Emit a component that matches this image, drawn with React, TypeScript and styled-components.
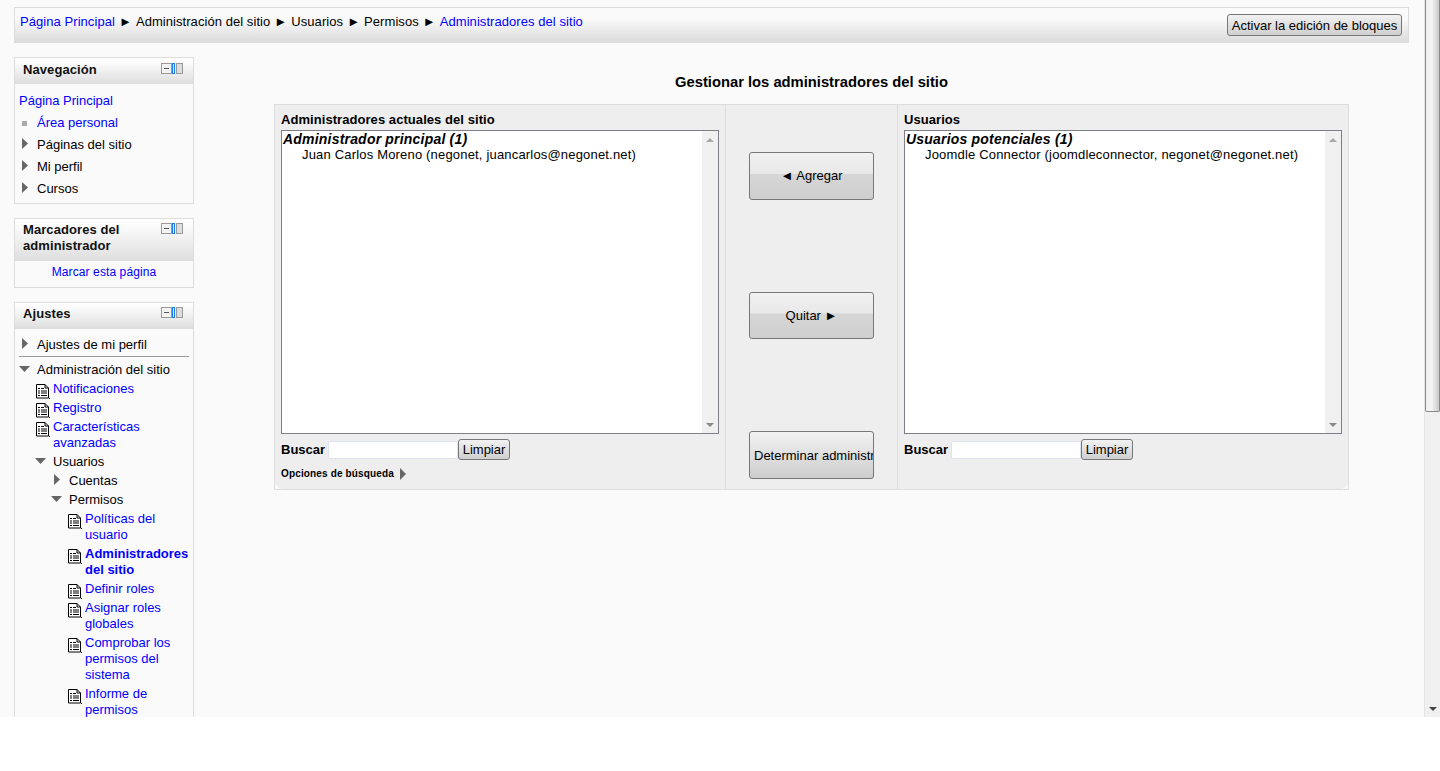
import React from "react";
import styled, { createGlobalStyle } from "styled-components";

const Global = createGlobalStyle`
  html, body { margin: 0; padding: 0; background: #fff; overflow: hidden; height: 100%; }
  body { font-family: "Liberation Sans", Arial, sans-serif; font-size: 13px; line-height: 16px; color: #000; }
`;

const Viewport = styled.div`
  display: flex;
  height: 717px;
  width: 1440px;
  overflow: hidden;
  background: #fafafa;
`;
const Page = styled.div`
  flex: 1;
  min-width: 0;
  padding: 7px 15px 0 14px;
  overflow: hidden;
`;
const PageBar = styled.div`
  width: 16px;
  flex: none;
  display: flex;
  flex-direction: column;
  background: #f0f0f0;
  border-left: 1px solid #e4e4e4;
  box-sizing: border-box;
  position: relative;
`;
const PageThumb = styled.div`
  height: 412px;
  box-sizing: border-box;
  background: linear-gradient(90deg, #eee, #f4f4f4 45%, #c8c8c8);
  border: 1px solid #8a8a8a;
  border-top: none;
  border-radius: 0 0 2px 2px;
`;
const PageTrack = styled.div`
  flex: 1;
`;
const PageDown = styled.div`
  height: 16px;
  display: flex;
  align-items: center;
  justify-content: center;
`;
const TopBar = styled.div`
  height: 36px;
  box-sizing: border-box;
  border: 1px solid #ddd;
  background: linear-gradient(#fafafa, #fafafa 30%, #dcdcdc);
  display: flex;
  justify-content: space-between;
  padding: 6px 6px 0 5px;
`;
const Crumbs = styled.div`
  display: flex;
  gap: 4px;
  white-space: nowrap;
`;
const Crumb = styled.span<{ $link?: boolean }>`
  color: ${(p) => (p.$link ? "#0000ff" : "#000")};
  letter-spacing: 0.06px;
`;
const Sep = styled.span`
  width: 13px;
  display: flex;
  justify-content: center;
`;
const EditButton = styled.button`
  height: 22px;
  width: 175px;
  padding: 1px 0 0;
  font: inherit;
  color: #000;
  border: 1px solid #777;
  border-radius: 3px;
  background: linear-gradient(#f2f2f2, #cfcfcf);
  white-space: nowrap;
`;
const Columns = styled.div`
  display: flex;
  margin-top: 14px;
`;
const Sidebar = styled.div`
  width: 180px;
  flex: none;
  display: flex;
  flex-direction: column;
  gap: 14px;
`;
const Block = styled.div`
  border: 1px solid #ddd;
  background: #fafafa;
`;
const BlockHead = styled.div<{ $h: number; $tight?: boolean }>`
  height: ${(p) => p.$h}px;
  box-sizing: border-box;
  padding: ${(p) => (p.$tight ? 2 : 3)}px 10px 0 8px;
  display: flex;
  justify-content: space-between;
  background: linear-gradient(#fff, #fafafa 20%, #dedede);
`;
const BlockTitle = styled.div`
  font-weight: bold;
  color: #111;
  width: 130px;
  padding-top: 1px;
  letter-spacing: 0.08px;
`;
const Controls = styled.svg`
  width: 22px;
  height: 12px;
  flex: none;
  margin-top: 2px;
`;
const BlockBody = styled.div<{ $first?: number }>`
  padding: ${(p) => p.$first ?? 5}px 4px 3px;
`;
const CenterBody = styled.div`
  text-align: center;
  font-size: 12px;
  letter-spacing: 0.1px;
  padding: 3px 0 7px;
  color: #0000ff;
`;
const NavRow = styled.div<{ $link?: boolean; $level?: number; $nested?: boolean }>`
  display: flex;
  margin-left: ${(p) => (p.$level ?? 0) * 16}px;
  padding: ${(p) => (p.$nested ? "0 0 3px" : "3px 0")};
  color: ${(p) => (p.$link ? "#0000ff" : "#000")};
`;
const Slot = styled.span`
  width: 18px;
  flex: none;
  position: relative;
`;
const SlotIcon = styled.svg<{ $top?: number }>`
  position: absolute;
  left: 0;
  top: ${(p) => p.$top ?? 0}px;
`;
const NavPlain = styled.div`
  color: #0000ff;
  padding: 3px 0;
`;
const NavText = styled.span<{ $bold?: boolean }>`
  font-weight: ${(p) => (p.$bold ? "bold" : "normal")};
`;
const Divider = styled.div`
  border-top: 1px solid #999;
  margin: 0 0 2px;
`;
const Main = styled.div`
  margin-left: 80px;
  width: 1075px;
  flex: none;
`;
const Title = styled.h2`
  margin: 17px 0 14px;
  text-align: center;
  font-size: 14.75px;
  line-height: 16px;
  font-weight: bold;
`;
const Panel = styled.div`
  height: 386px;
  box-sizing: border-box;
  border: 1px solid #ddd;
  background: #fafafa;
`;
const PanelInner = styled.div`
  display: flex;
  height: 100%;
  background: #eee;
  border-radius: 0 0 8px 8px;
`;
const ListCol = styled.div`
  width: 450px;
  flex: none;
  box-sizing: border-box;
  padding: 6px 6px 0;
`;
const MidCol = styled.div`
  width: 173px;
  flex: none;
  box-sizing: border-box;
  border-left: 1px solid #ddd;
  border-right: 1px solid #ddd;
  display: flex;
  flex-direction: column;
  align-items: center;
  padding-top: 47px;
`;
const ColLabel = styled.div`
  font-weight: bold;
  font-size: 13px;
  letter-spacing: 0.06px;
  height: 19px;
  padding-top: 1px;
  box-sizing: border-box;
`;
const ListBox = styled.div`
  height: 304px;
  box-sizing: border-box;
  border: 1px solid #7f7f8a;
  background: #fff;
  display: flex;
`;
const ListItems = styled.div`
  flex: 1;
  padding-top: 1px;
`;
const GroupLabel = styled.div`
  font-weight: bold;
  font-style: italic;
  font-size: 14px;
  letter-spacing: 0.2px;
  line-height: 15px;
  padding-left: 1px;
`;
const Option = styled.div`
  padding-left: 20px;
  line-height: 15px;
  letter-spacing: 0.18px;
`;
const ListScroll = styled.div`
  width: 16px;
  flex: none;
  background: #f0f0f0;
  display: flex;
  flex-direction: column;
  justify-content: space-between;
  align-items: center;
  padding: 7px 0 5px;
`;
const SearchRow = styled.div`
  display: flex;
  align-items: center;
  margin-top: 5px;
  height: 21px;
`;
const SearchLabel = styled.span`
  font-weight: bold;
  width: 47px;
`;
const SearchInput = styled.input`
  width: 130px;
  height: 18px;
  box-sizing: border-box;
  border: 1px solid #dfe3ee;
  border-radius: 2px;
  background: #fff;
  padding: 0;
`;
const ClearButton = styled.button`
  width: 52px;
  height: 21px;
  padding: 0;
  font: inherit;
  color: #000;
  border: 1px solid #777;
  border-radius: 3px;
  background: linear-gradient(#f2f2f2, #cfcfcf);
`;
const MoreOptions = styled.div`
  display: flex;
  align-items: center;
  gap: 6px;
  margin-top: 7px;
  font-size: 10px;
  font-weight: bold;
  letter-spacing: 0.15px;
  height: 14px;
`;
const MoveButton = styled.button<{ $step?: boolean; $h: number; $gap: number; $left?: boolean }>`
  width: 125px;
  height: ${(p) => p.$h}px;
  margin-bottom: ${(p) => p.$gap}px;
  flex: none;
  padding: ${(p) => (p.$left ? "1px 0 0 4px" : "0")};
  font: inherit;
  font-size: 13px;
  color: #000;
  border: 1px solid #777;
  border-radius: 3px;
  overflow: hidden;
  white-space: nowrap;
  text-align: ${(p) => (p.$left ? "left" : "center")};
  background: ${(p) =>
    p.$step
      ? "linear-gradient(#f1f1f1, #e8e8e8 45%, #d6d6d6 46%, #cfcfcf)"
      : "linear-gradient(#f2f2f2, #cdcdcd)"};
`;

const Arrow = ({ open }: { open?: boolean }) =>
  open ? (
    <SlotIcon width="12" height="16" viewBox="0 0 12 16">
      <polygon points="0,4 11,4 5.5,10" fill="#666" />
    </SlotIcon>
  ) : (
    <SlotIcon width="12" height="16" viewBox="0 0 12 16">
      <polygon points="3,1 9,6.5 3,12" fill="#666" />
    </SlotIcon>
  );

const Bullet = () => (
  <SlotIcon width="12" height="16" viewBox="0 0 12 16">
    <rect x="3" y="6" width="5" height="5" fill="#aaa" />
  </SlotIcon>
);

const Doc = () => (
  <SlotIcon $top={2} width="15" height="16" viewBox="0 0 15 16">
    <path d="M1.5 1.5H10L13.5 5V15H1.5Z M10 1.5V5H13.5" fill="#fff" stroke="#000" strokeWidth="1" />
    <path d="M3 5.5h2M6 5.5h3M3 8h2M6 8h6M3 10h2M6 10h6M3 12.5h2M6 12.5h6" stroke="#000" strokeWidth="1" />
    <path d="M14 15.5h1" stroke="#000" />
  </SlotIcon>
);

const BlockControls = () => (
  <Controls viewBox="0 0 22 12">
    <rect x="0.5" y="0.5" width="10" height="10" fill="#f3f3f3" stroke="#999" />
    <path d="M3 5.5h5" stroke="#555" />
    <rect x="11.5" y="0.5" width="2" height="10" fill="#cfe6ff" stroke="#1b7ff0" />
    <rect x="15.5" y="0.5" width="6" height="10" fill="#ddd" stroke="#999" />
  </Controls>
);

const TreeRow = ({ kind, level, link, bold, children }: { kind: "open" | "closed" | "doc" | "bullet"; level?: number; link?: boolean; bold?: boolean; children: React.ReactNode }) => (
  <NavRow $level={level} $link={link} $nested={!!level}>
    <Slot>
      {kind === "open" && <Arrow open />}
      {kind === "closed" && <Arrow />}
      {kind === "bullet" && <Bullet />}
      {kind === "doc" && <Doc />}
    </Slot>
    <NavText $bold={bold}>{children}</NavText>
  </NavRow>
);

const ListPanel = ({ label, group, option, options }: { label: string; group: string; option: string; options?: boolean }) => (
  <ListCol>
    <ColLabel>{label}</ColLabel>
    <ListBox>
      <ListItems>
        <GroupLabel>{group}</GroupLabel>
        <Option>{option}</Option>
      </ListItems>
      <ListScroll>
        <svg width="8" height="5" viewBox="0 0 8 5"><polygon points="4,0 8,4 0,4" fill="#a8a8a8" /></svg>
        <svg width="8" height="5" viewBox="0 0 8 5"><polygon points="0,0 8,0 4,4" fill="#888" /></svg>
      </ListScroll>
    </ListBox>
    <SearchRow>
      <SearchLabel>Buscar</SearchLabel>
      <SearchInput />
      <ClearButton>Limpiar</ClearButton>
    </SearchRow>
    {options && (
      <MoreOptions>
        Opciones de búsqueda
        <svg width="7" height="14" viewBox="0 0 7 14"><polygon points="0,1 6,7 0,13" fill="#666" /></svg>
      </MoreOptions>
    )}
  </ListCol>
);

export default function App() {
  return (
    <>
      <Global />
      <Viewport>
        <Page>
          <TopBar>
            <Crumbs>
              <Crumb $link>Página Principal</Crumb>
              <Sep>►</Sep>
              <Crumb>Administración del sitio</Crumb>
              <Sep>►</Sep>
              <Crumb>Usuarios</Crumb>
              <Sep>►</Sep>
              <Crumb>Permisos</Crumb>
              <Sep>►</Sep>
              <Crumb $link>Administradores del sitio</Crumb>
            </Crumbs>
            <EditButton>Activar la edición de bloques</EditButton>
          </TopBar>
          <Columns>
            <Sidebar>
              <Block>
                <BlockHead $h={26}>
                  <BlockTitle>Navegación</BlockTitle>
                  <BlockControls />
                </BlockHead>
                <BlockBody $first={6}>
                  <NavPlain>Página Principal</NavPlain>
                  <TreeRow kind="bullet" link>Área personal</TreeRow>
                  <TreeRow kind="closed">Páginas del sitio</TreeRow>
                  <TreeRow kind="closed">Mi perfil</TreeRow>
                  <TreeRow kind="closed">Cursos</TreeRow>
                </BlockBody>
              </Block>
              <Block>
                <BlockHead $h={42} $tight>
                  <BlockTitle>Marcadores del administrador</BlockTitle>
                  <BlockControls />
                </BlockHead>
                <CenterBody>Marcar esta página</CenterBody>
              </Block>
              <Block>
                <BlockHead $h={26} $tight>
                  <BlockTitle>Ajustes</BlockTitle>
                  <BlockControls />
                </BlockHead>
                <BlockBody>
                  <TreeRow kind="closed">Ajustes de mi perfil</TreeRow>
                  <Divider />
                  <TreeRow kind="open">Administración del sitio</TreeRow>
                  <TreeRow kind="doc" level={1} link>Notificaciones</TreeRow>
                  <TreeRow kind="doc" level={1} link>Registro</TreeRow>
                  <TreeRow kind="doc" level={1} link>Características avanzadas</TreeRow>
                  <TreeRow kind="open" level={1}>Usuarios</TreeRow>
                  <TreeRow kind="closed" level={2}>Cuentas</TreeRow>
                  <TreeRow kind="open" level={2}>Permisos</TreeRow>
                  <TreeRow kind="doc" level={3} link>Políticas del usuario</TreeRow>
                  <TreeRow kind="doc" level={3} link bold>Administradores del sitio</TreeRow>
                  <TreeRow kind="doc" level={3} link>Definir roles</TreeRow>
                  <TreeRow kind="doc" level={3} link>Asignar roles globales</TreeRow>
                  <TreeRow kind="doc" level={3} link>Comprobar los permisos del sistema</TreeRow>
                  <TreeRow kind="doc" level={3} link>Informe de permisos</TreeRow>
                </BlockBody>
              </Block>
            </Sidebar>
            <Main>
              <Title>Gestionar los administradores del sitio</Title>
              <Panel>
                <PanelInner>
                  <ListPanel
                    label="Administradores actuales del sitio"
                    group="Administrador principal (1)"
                    option="Juan Carlos Moreno (negonet, juancarlos@negonet.net)"
                    options
                  />
                  <MidCol>
                    <MoveButton $step $h={48} $gap={92}>◄ Agregar</MoveButton>
                    <MoveButton $step $h={47} $gap={92}>Quitar ►</MoveButton>
                    <MoveButton $h={48} $gap={0} $left>Determinar administradores</MoveButton>
                  </MidCol>
                  <ListPanel
                    label="Usuarios"
                    group="Usuarios potenciales (1)"
                    option="Joomdle Connector (joomdleconnector, negonet@negonet.net)"
                  />
                </PanelInner>
              </Panel>
            </Main>
          </Columns>
        </Page>
        <PageBar>
          <PageThumb />
          <PageTrack />
          <PageDown>
            <svg width="8" height="5" viewBox="0 0 8 5"><polygon points="0,0 8,0 4,4" fill="#444" /></svg>
          </PageDown>
        </PageBar>
      </Viewport>
    </>
  );
}
